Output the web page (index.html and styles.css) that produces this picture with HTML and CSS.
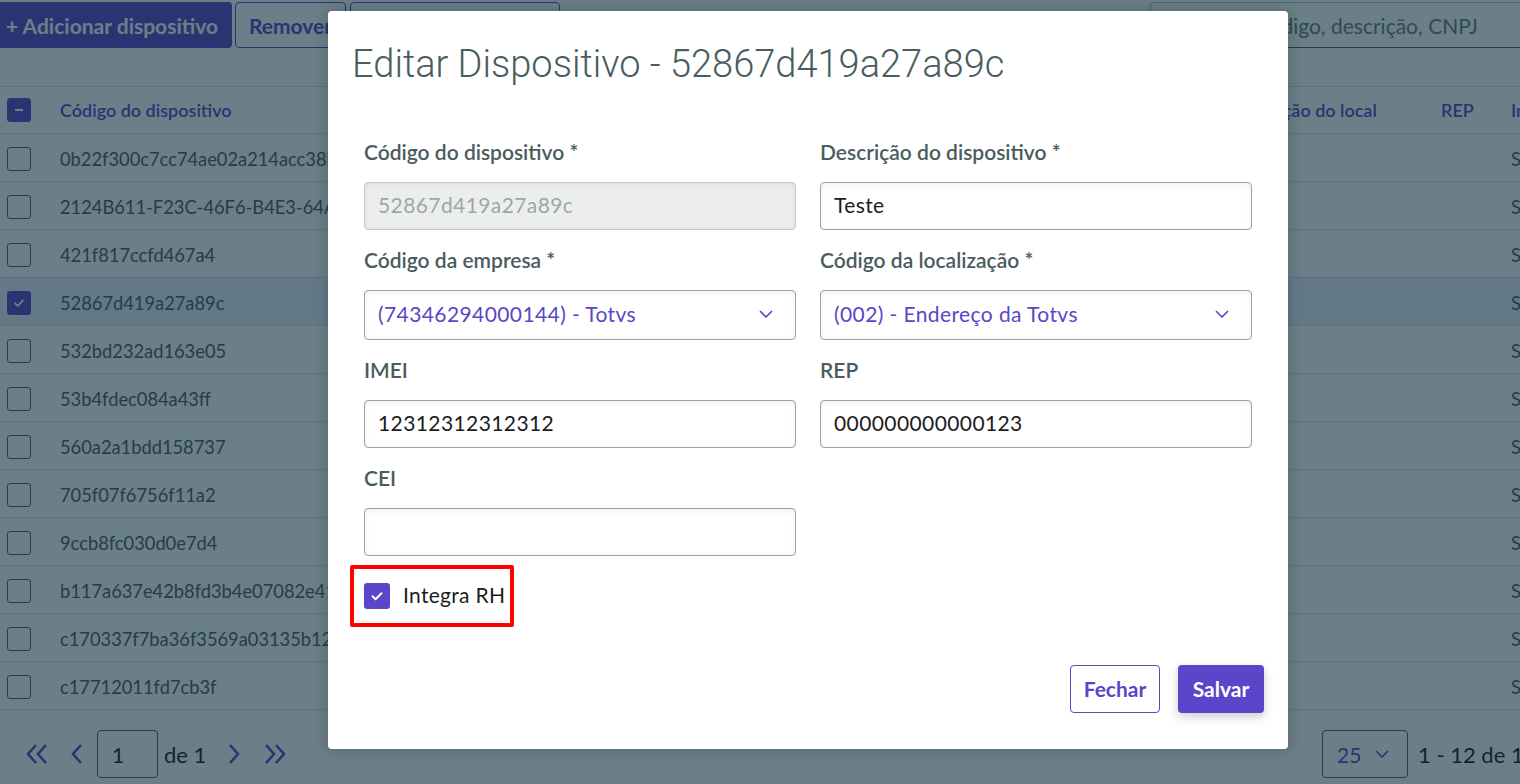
FILE: index.html
```html
<!DOCTYPE html>
<html lang="pt-BR">
<head>
<meta charset="utf-8">
<title>Dispositivos</title>
<link rel="stylesheet" href="styles.css">
</head>
<body>
<div class="page">
  <div class="toolbar">
    <button class="btn btn-primary btn-add">+ Adicionar dispositivo</button>
    <button class="btn btn-outline btn-remove">Remover</button>
    <button class="btn btn-outline btn-edit">Editar dispositivo</button>
    <div class="search"><span>Pesquisar por código, descrição, CNPJ</span></div>
  </div>

  <div class="grid">
    <div class="row head">
      <div class="cell c-check"><span class="cb cb-on"><svg viewBox="0 0 24 24" width="24" height="24"><path d="M8 12h8" stroke="#fff" stroke-width="2" fill="none"/></svg></span></div>
      <div class="cell code">Código do dispositivo</div>
      <div class="cell">Descrição do local</div>
      <div class="cell">REP</div>
      <div class="cell">Integra RH</div>
    </div>
    <div class="row"><div class="cell c-check"><span class="cb"></span></div><div class="cell code">0b22f300c7cc74ae02a214acc38b21f0</div><div class="cell"></div><div class="cell"></div><div class="cell">Sim</div></div>
    <div class="row"><div class="cell c-check"><span class="cb"></span></div><div class="cell code">2124B611-F23C-46F6-B4E3-64A1C0D2E9F1</div><div class="cell"></div><div class="cell"></div><div class="cell">Sim</div></div>
    <div class="row"><div class="cell c-check"><span class="cb"></span></div><div class="cell code">421f817ccfd467a4</div><div class="cell"></div><div class="cell"></div><div class="cell">Sim</div></div>
    <div class="row selected"><div class="cell c-check"><span class="cb cb-on"><svg viewBox="0 0 24 24" width="24" height="24"><path d="M8 12.3l2.7 2.6 5.3-5.4" stroke="#fff" stroke-width="1.8" fill="none" stroke-linecap="round" stroke-linejoin="round"/></svg></span></div><div class="cell code">52867d419a27a89c</div><div class="cell"></div><div class="cell"></div><div class="cell">Sim</div></div>
    <div class="row"><div class="cell c-check"><span class="cb"></span></div><div class="cell code">532bd232ad163e05</div><div class="cell"></div><div class="cell"></div><div class="cell">Sim</div></div>
    <div class="row"><div class="cell c-check"><span class="cb"></span></div><div class="cell code">53b4fdec084a43ff</div><div class="cell"></div><div class="cell"></div><div class="cell">Sim</div></div>
    <div class="row"><div class="cell c-check"><span class="cb"></span></div><div class="cell code">560a2a1bdd158737</div><div class="cell"></div><div class="cell"></div><div class="cell">Sim</div></div>
    <div class="row"><div class="cell c-check"><span class="cb"></span></div><div class="cell code">705f07f6756f11a2</div><div class="cell"></div><div class="cell"></div><div class="cell">Sim</div></div>
    <div class="row"><div class="cell c-check"><span class="cb"></span></div><div class="cell code">9ccb8fc030d0e7d4</div><div class="cell"></div><div class="cell"></div><div class="cell">Sim</div></div>
    <div class="row"><div class="cell c-check"><span class="cb"></span></div><div class="cell code">b117a637e42b8fd3b4e07082e41a</div><div class="cell"></div><div class="cell"></div><div class="cell">Sim</div></div>
    <div class="row"><div class="cell c-check"><span class="cb"></span></div><div class="cell code">c170337f7ba36f3569a03135b12c</div><div class="cell"></div><div class="cell"></div><div class="cell">Sim</div></div>
    <div class="row"><div class="cell c-check"><span class="cb"></span></div><div class="cell code">c17712011fd7cb3f</div><div class="cell"></div><div class="cell"></div><div class="cell">Sim</div></div>
  </div>

  <div class="pager">
    <div class="pager-left">
      <svg class="pg-icon dbl" viewBox="0 0 24 22" width="24" height="22"><path d="M11 2L3 11l8 9M21 2l-8 9 8 9" stroke="#5b45c8" stroke-width="2.6" fill="none"/></svg>
      <svg class="pg-icon sgl" viewBox="0 0 13 22" width="13" height="22"><path d="M11 2L3 11l8 9" stroke="#5b45c8" stroke-width="2.6" fill="none"/></svg>
      <div class="pg-input">1</div>
      <span class="pg-text">de 1</span>
      <svg class="pg-icon sgl" viewBox="0 0 13 22" width="13" height="22"><path d="M2 2l8 9-8 9" stroke="#5b45c8" stroke-width="2.6" fill="none"/></svg>
      <svg class="pg-icon dbl" viewBox="0 0 24 22" width="24" height="22"><path d="M3 2l8 9-8 9M13 2l8 9-8 9" stroke="#5b45c8" stroke-width="2.6" fill="none"/></svg>
    </div>
    <div class="pager-right">
      <div class="pg-select">25 <svg viewBox="0 0 14 8" width="14" height="8"><path d="M1 1l6 6 6-6" stroke="#5b45c8" stroke-width="1.6" fill="none"/></svg></div>
      <span class="pg-count">1 - 12 de 12</span>
    </div>
  </div>
</div>

<div class="overlay"></div>

<div class="modal">
  <div class="modal-header">
    <h1 class="modal-title">Editar Dispositivo - 52867d419a27a89c</h1>
  </div>
  <div class="modal-body">
    <div class="form">
      <div class="field">
        <label class="label">Código do dispositivo *</label>
        <div class="input disabled">52867d419a27a89c</div>
      </div>
      <div class="field">
        <label class="label">Descrição do dispositivo *</label>
        <div class="input">Teste</div>
      </div>
      <div class="field">
        <label class="label">Código da empresa *</label>
        <div class="input select"><span>(74346294000144) - Totvs</span><svg viewBox="0 0 14 8" width="14" height="8"><path d="M1 1l6 6 6-6" stroke="#5b45c8" stroke-width="1.6" fill="none"/></svg></div>
      </div>
      <div class="field">
        <label class="label">Código da localização *</label>
        <div class="input select"><span>(002) - Endereço da Totvs</span><svg viewBox="0 0 14 8" width="14" height="8"><path d="M1 1l6 6 6-6" stroke="#5b45c8" stroke-width="1.6" fill="none"/></svg></div>
      </div>
      <div class="field">
        <label class="label">IMEI</label>
        <div class="input">12312312312312</div>
      </div>
      <div class="field">
        <label class="label">REP</label>
        <div class="input">000000000000123</div>
      </div>
      <div class="field">
        <label class="label">CEI</label>
        <div class="input"></div>
      </div>
      <div class="check-row">
        <div class="highlight">
          <span class="mcb"><svg viewBox="0 0 26 26" width="26" height="26"><path d="M8.5 13.3l3 2.9 6-6" stroke="#fff" stroke-width="2" fill="none" stroke-linecap="round" stroke-linejoin="round"/></svg></span>
          <span class="check-label">Integra RH</span>
        </div>
      </div>
    </div>
  </div>
  <div class="modal-footer">
    <button class="mbtn mbtn-outline">Fechar</button>
    <button class="mbtn mbtn-primary">Salvar</button>
  </div>
</div>
</body>
</html>
```

FILE: styles.css
```css
html, body {
  margin: 0;
  padding: 0;
}

body {
  width: 1520px;
  height: 784px;
  overflow: hidden;
  position: relative;
  background: #ffffff;
  font-family: Lato, "Noto Sans", sans-serif;
  color: #1c1c1c;
}

.page {
  width: 1720px;
}

/* toolbar */
.toolbar {
  display: flex;
  align-items: stretch;
  height: 46px;
  margin-top: 2px;
  width: 1560px;
}

.btn {
  font-family: Lato, "Noto Sans", sans-serif;
  font-size: 21px;
  font-weight: 700;
  border-radius: 4px;
  cursor: pointer;
  height: 46px;
}

.btn-primary {
  background: #5b45c8;
  color: #ffffff;
  border: none;
}

.btn-add {
  width: 232px;
  padding: 0 0 0 6px;
  text-align: left;
  border-radius: 0 4px 4px 0;
}

.btn-outline {
  background: #ffffff;
  color: #5b45c8;
  border: 1px solid #5b45c8;
}

.btn-remove {
  width: 111px;
  margin-left: 3px;
  padding: 0 0 0 13px;
  text-align: left;
}

.btn-edit {
  width: 210px;
  margin-left: 4px;
}

.search {
  margin-left: auto;
  width: 410px;
  height: 46px;
  box-sizing: border-box;
  border: 1px solid #b9c1c4;
  border-bottom-color: #4a5c60;
  border-radius: 4px;
  display: flex;
  align-items: center;
  justify-content: flex-end;
  padding-right: 81px;
  font-size: 21px;
  font-weight: 400;
  color: #6d7c80;
  white-space: nowrap;
  overflow: hidden;
}

/* grid */
.grid {
  margin-top: 38px;
}

.row {
  display: grid;
  grid-template-columns: 60px 1172px 209px 70px 200px;
  height: 48px;
  box-sizing: border-box;
  border-bottom: 1px solid #dfe4e6;
  align-items: center;
  font-size: 18.3px;
  color: #4a5c60;
  padding-top: 2px;
}

.row.head {
  border-top: 1px solid #dfe4e6;
  color: #5b45c8;
  font-weight: 600;
  font-size: 18px;
  padding-top: 0;
}

.row.selected {
  background: #edf0fd;
}

.cell {
  white-space: nowrap;
  overflow: hidden;
}

.cell.code {
  max-width: 268px;
}

.c-check {
  padding-left: 7px;
  display: flex;
  align-items: center;
}

.cb {
  width: 24px;
  height: 24px;
  box-sizing: border-box;
  border: 1px solid #4a5c60;
  border-radius: 3px;
  background: #ffffff;
  display: block;
}

.cb svg {
  display: block;
  margin: -1px;
}

.cb-on {
  background: #5b45c8;
  border-color: #5b45c8;
}

/* pager */
.pager {
  display: flex;
  justify-content: space-between;
  align-items: center;
  width: 1520px;
  margin-top: 20px;
  height: 48px;
}

.pager-left {
  display: flex;
  align-items: center;
  padding-left: 25px;
}

.pg-icon {
  display: block;
}

.pager-left .dbl:first-child {
  margin-right: 21px;
}

.pager-left .sgl:nth-child(2) {
  margin-right: 14px;
}

.pg-input {
  width: 61px;
  height: 48px;
  box-sizing: border-box;
  border: 1px solid #4a5c60;
  border-radius: 4px;
  font-size: 21px;
  display: flex;
  align-items: center;
  padding-left: 14px;
  color: #1c1c1c;
}

.pg-text {
  font-size: 22px;
  margin: 0 22px 0 6px;
  color: #1c1c1c;
}

.pager-left .sgl:nth-child(5) {
  margin-right: 22px;
}

.pager-right {
  display: flex;
  align-items: center;
}

.pg-select {
  width: 86px;
  height: 48px;
  box-sizing: border-box;
  border: 1px solid #4a5c60;
  border-radius: 4px;
  display: flex;
  align-items: center;
  padding-left: 14px;
  gap: 14px;
  font-size: 21px;
  color: #5b45c8;
  margin-right: 10px;
}

.pg-count {
  font-size: 22px;
  color: #1c1c1c;
  white-space: nowrap;
  width: 102px;
  overflow: hidden;
}

/* overlay */
.overlay {
  position: absolute;
  inset: 0;
  background: rgba(8, 42, 57, 0.6);
}

/* modal */
.modal {
  position: absolute;
  left: 328px;
  top: 11px;
  width: 960px;
  background: #ffffff;
  border-radius: 4px;
  box-shadow: 0 0 16px rgba(0, 0, 0, 0.22);
  color: #4a5c60;
}

.modal-header {
  padding: 29px 25px 0 24px;
}

.modal-title {
  margin: 0;
  font-family: Roboto, "Liberation Sans", sans-serif;
  font-weight: 300;
  font-size: 38px;
  line-height: 48px;
  color: #4a5c60;
}

.modal-body {
  padding: 52px 36px 0;
}

.form {
  display: grid;
  grid-template-columns: 432px 432px;
  column-gap: 24px;
  row-gap: 18px;
}

.field {
  display: flex;
  flex-direction: column;
}

.label {
  font-size: 21px;
  font-weight: 600;
  line-height: 24px;
  margin-bottom: 18px;
  color: #4a5c60;
}

.input {
  height: 48px;
  box-sizing: border-box;
  border: 1px solid #9aa4a7;
  border-radius: 4px;
  box-shadow: inset 0 1px 6px rgba(0, 0, 0, 0.08);
  display: flex;
  align-items: center;
  padding: 0 13px 3px;
  font-size: 21px;
  letter-spacing: 0.4px;
  color: #1c1c1c;
  background: #ffffff;
}

.input.disabled {
  background: #eceeee;
  color: #9da7a9;
  border-color: #c3c8ca;
}

.input.select {
  height: 50px;
  justify-content: space-between;
  color: #5b45c8;
  padding-right: 22px;
}

.input.select svg {
  display: block;
}

.check-row {
  grid-column: 1 / span 2;
  margin-top: -9px;
}

.highlight {
  display: inline-flex;
  align-items: center;
  border: 4px solid #ff0000;
  border-radius: 2px;
  padding: 14px 5px 14px 10px;
  margin-left: -14px;
}

.mcb {
  width: 26px;
  height: 26px;
  border-radius: 3px;
  background: #5b45c8;
  display: block;
}

.mcb svg {
  display: block;
}

.check-label {
  margin-left: 13px;
  font-size: 21px;
  letter-spacing: 0.3px;
  color: #1c1c1c;
  line-height: 24px;
  padding-bottom: 2px;
}

.modal-footer {
  display: flex;
  justify-content: flex-end;
  gap: 18px;
  padding: 38px 24px 36px;
}

.mbtn {
  height: 48px;
  border-radius: 4px;
  font-family: Lato, "Noto Sans", sans-serif;
  font-size: 21px;
  font-weight: 700;
  padding: 0 12px 2px;
  cursor: pointer;
}

.mbtn-outline {
  background: #ffffff;
  color: #5b45c8;
  border: 1px solid #5b45c8;
  width: 90px;
}

.mbtn-primary {
  background: #5b45c8;
  color: #ffffff;
  border: none;
  width: 86px;
  box-shadow: 0 4px 10px rgba(60, 60, 90, 0.25);
}
```
